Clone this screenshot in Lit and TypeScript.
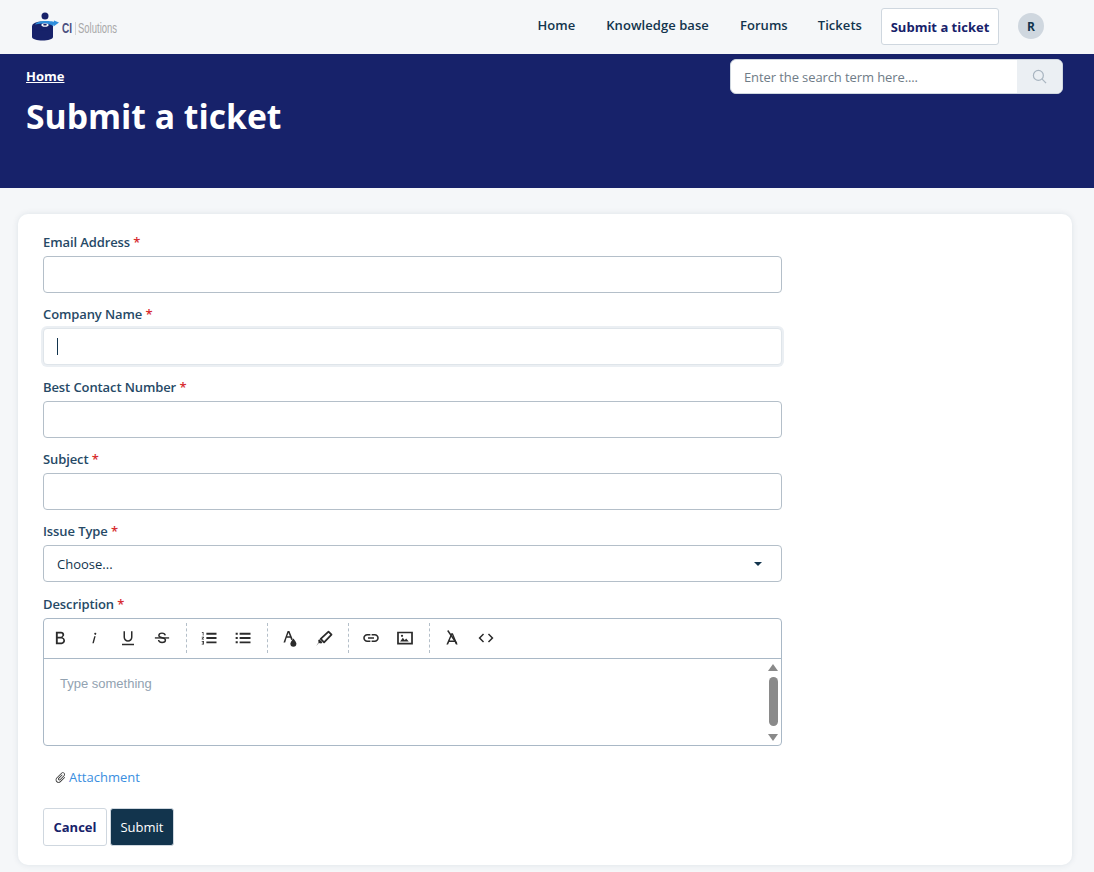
import { LitElement, html, css, svg } from "lit";
import { customElement } from "lit/decorators.js";

const ico = (body: unknown, w = 18) => html`<svg class="ic" width=${w} height=${w} viewBox="0 0 24 24" fill="currentColor">${body}</svg>`;

const groups = [
  [
    svg`<path d="M15.600 10.790c1.200-.8 2-1.800 2-3.100 0-2.200-1.900-3.900-4.200-3.900H6.500v16.400h7.700c2.500 0 4.500-1.900 4.500-4.400 0-2.100-1.200-3.800-3.100-4.600zM9 6.100h4.200c1.200 0 2.100.9 2.100 2s-.9 2.200-2.100 2.200H9V6.100zm5 11.800H9v-5.200h5c1.400 0 2.400 1.200 2.400 2.600s-1 2.600-2.400 2.600z"/>`,
    svg`<path d="M13.700 5a1.300 1.300 0 1 0 .01 0zM12.300 9.500l-2.500 9.500h1.900l2.500-9.500z"/>`,
    svg`<path d="M12 17c3.310 0 6-2.690 6-6V3h-2v8c0 2.200-1.800 4-4 4s-4-1.800-4-4V3H6v8c0 3.310 2.690 6 6 6zm-8 2.500v2h16v-2H4z"/>`,
    svg`<path d="M2.500 11h19v1.800h-19z"/><path d="M16.300 8.500c-.3-1.900-2-3-4.300-3-2.500 0-4.200 1.200-4.200 3 0 3.700 8.800 2.500 8.800 6.200 0 1.900-1.900 3.300-4.500 3.300-2.700 0-4.500-1.300-4.700-3.300" fill="none" stroke="currentColor" stroke-width="1.900"/>`,
  ],
  [
    svg`<path d="M8.500 5h13.500v2.500H8.500zM8.500 10.800h13.500v2.500H8.500zM8.500 16.500h13.500v2.500H8.500z"/><path d="M2.500 4h2.200v4.600h-1V5h-1.200zM2.300 10.200h3v1l-1.800 1.800h1.800v1h-3v-1l1.800-1.800H2.300zM2.300 16h3v4.800h-3v-1h2v-.9h-1.200v-.9h1.200V17h-2z"/>`,
    svg`<path d="M7.500 5h14.500v2.500H7.500zM7.500 10.800h14.500v2.500H7.500zM7.500 16.500h14.500v2.500H7.500z"/><path d="M2.200 4.900h2.800v2.800H2.200zM2.200 10.600h2.800v2.800H2.200zM2.200 16.300h2.800v2.800H2.200z"/>`,
  ],
  [
    svg`<path d="M8.800 2.500h2.400L15.800 14l-2.300.8-1-3H7.500L5.600 18H3.300zM8.200 9.800h3.600L10 4.900z"/><path d="M16.500 12.500s-4 4.500-4 7a4 4 0 0 0 8 0c0-2.500-4-7-4-7z"/>`,
    svg`<path d="M1.500 22.500l3.500-4 3.400.7 1.500-1.500-4.200-4.200-1.400 1.400.4 3.200z"/><path d="M7.600 13.200L18 3.600l4 4-9.900 10.200z" fill="none" stroke="currentColor" stroke-width="2.400" stroke-linejoin="round"/>`,
  ],
  [
    svg`<path d="M3.700 12c0-1.800 1.500-3.200 3.300-3.200h4.200V6.600H7c-3 0-5.400 2.400-5.400 5.400S4 17.400 7 17.400h4.200v-2.200H7c-1.800 0-3.300-1.400-3.300-3.200zM8 13.100h8v-2.200H8v2.200zm9-6.500h-4.200v2.200H17c1.800 0 3.300 1.400 3.300 3.200s-1.500 3.200-3.300 3.200h-4.200v2.200H17c3 0 5.400-2.400 5.400-5.400S20 6.600 17 6.600z"/>`,
    svg`<path fill-rule="evenodd" d="M1.500 3.500h21v17h-21zM3.800 5.800v12.400h16.400V5.800z"/><path d="M5.500 16.500l3.600-4.800 2.600 3.200 1.800-2.300 3.500 3.900z"/><circle cx="8" cy="9" r="1.500"/>`,
  ],
  [
    svg`<path d="M11 5.500h2.200L19.500 20.500h-2.300l-1.400-3.300H8.200l-1.400 3.300H4.500zM9 15.300h6L12 7.800z"/><path d="M5.500 2.600l1.600-1.200L19 18.800l-1.600 1.200z"/>`,
    svg`<path d="M9.400 16.600L4.800 12l4.600-4.600L8 6l-6 6 6 6 1.400-1.400zm5.200 0l4.600-4.600-4.600-4.600L16 6l6 6-6 6-1.400-1.400z"/>`,
  ],
];

@customElement("app-root")
export class AppRoot extends LitElement {
  static styles = css`
    :host { display: block; min-height: 872px; background: #f5f7f9; font-family: "Open Sans", sans-serif; color: #12344d; font-size: 13px; overflow: hidden; }
    * { box-sizing: border-box; }
    .top { height: 54px; display: flex; align-items: center; justify-content: space-between; padding: 0 50px 0 29px; }
    .logo { display: block; }
    .nav { display: flex; align-items: center; font-weight: 600; font-size: 13px; }
    .nav a { color: #12344d; text-decoration: none; margin-right: 30px; position: relative; top: -2px; letter-spacing: 0.06px; }
    .nav a.wide { margin-right: 31px; }
    .nav a.tickets { margin-right: 19px; }
    .nav a.active { top: -0.5px; margin-right: 19px; height: 37px; width: 118px; justify-content: center; display: flex; align-items: center; background: #fff; border: 1px solid #cfd7df; border-radius: 3px; color: #17226a; font-weight: 700; letter-spacing: 0; }
    .avatar { width: 26px; height: 26px; border-radius: 50%; background: #cfd7df; display: flex; align-items: center; justify-content: center; font-size: 12px; font-weight: 700; margin-top: -2px; }
    .banner { height: 134px; background: #17226a; color: #fff; padding: 5px 31px 0 26px; display: flex; justify-content: space-between; align-items: flex-start; }
    .crumb { color: #fff; font-weight: 700; font-size: 13px; text-decoration: underline; display: block; margin-top: 8px; }
    h1 { margin: 9px 0 0; font-size: 33.700px; line-height: 45px; font-weight: 700; }
    .search { width: 333px; height: 35px; display: flex; border-radius: 6px; background: #fff; border: 1px solid #cfd7df; overflow: hidden; }
    .search .ph { flex: 1; padding-left: 13px; line-height: 34px; color: #6f7c87; font-size: 13px; letter-spacing: -0.1px; }
    .search .btn { width: 45px; background: #ebeff3; display: flex; align-items: center; justify-content: center; color: #a9b5c0; }
    .card { margin: 26px 22px 0 18px; height: 651px; background: #fff; border-radius: 10px; box-shadow: 0 0 6px rgba(18, 52, 77, 0.1); padding: 18px 25px 0; }
    .form { width: 739px; }
    .field { display: block; margin-bottom: 11.350px; }
    .label { display: block; font-size: 13px; font-weight: 600; letter-spacing: -0.1px; line-height: 20px; margin-bottom: 4px; color: #264966; }
    .star { color: #d72d30; }
    .input { width: 100%; height: 37px; display: flex; align-items: center; border: 1px solid #b4bfc9; border-radius: 4px; padding: 0 13px; background: #fff; font: inherit; color: #12344d; outline: none; justify-content: space-between; }
    .input.focus { box-shadow: 0 0 0 2px #ebeff3; border: 1px solid #dfe5ea; }
    .caret { width: 1px; height: 17px; background: #12344d; }
    .tri { width: 0; height: 0; border: 4px solid transparent; border-top: 4px solid #12344d; border-bottom: 0; margin-right: 6px; }
    .editor { border: 1px solid #a9b8c6; border-radius: 4px; height: 128px; display: flex; flex-direction: column; }
    .tools { height: 40px; border-bottom: 1px solid #a9b8c6; display: flex; align-items: center; margin-left: -1px; flex: none; }
    .group { display: flex; align-items: center; height: 30px; padding-right: 7px; margin-right: 5px; border-right: 1px dashed #b4bfc9; }
    .group:last-child { border: 0; }
    .tool { width: 34px; display: flex; justify-content: center; color: #2b2b2b; }
    .ic { display: block; }
    .edit-body { flex: 1; display: flex; min-height: 0; }
    .ph2 { flex: 1; padding: 17px 16px 0; font-family: "Liberation Sans", Arial, sans-serif; font-size: 13px; color: #92a2b1; }
    .sb { width: 14px; display: flex; flex-direction: column; align-items: center; padding-top: 5px; margin-right: 1px; }
    .arrow { width: 0; height: 0; border: 5px solid transparent; }
    .arrow.up { border-top: 0; border-bottom: 7px solid #8a8a8a; }
    .arrow.down { border-bottom: 0; border-top: 7px solid #8a8a8a; margin-top: 8px; }
    .thumb { width: 9px; height: 49px; border-radius: 5px; background: #8a8a8a; margin-top: 6px; }
    .attach { display: flex; align-items: center; height: 20px; margin: 21px 0 0 11px; color: #3a8ee0; font-size: 13px; }
    .attach svg { margin-right: 2px; color: #333; margin-top: 2px; }
    .actions { display: flex; margin-top: 21px; gap: 3px; }
    .b { width: 64px; height: 38px; border-radius: 3px; border: 1px solid #cfd7df; display: flex; align-items: center; justify-content: center; font-size: 13px; background: #fff; color: #17226a; font-weight: 700; }
    .b.primary { background: #12344d; color: #fff; font-weight: 500; border-color: #cfd7df; }
  `;

  private field(label: string, body: unknown) {
    return html`<div class="field"><span class="label">${label} <span class="star">*</span></span>${body}</div>`;
  }

  render() {
    return html`
      <div class="top">
        <svg class="logo" width="92" height="32" viewBox="0 0 92 32" aria-label="CI Solutions">
          <circle cx="16" cy="5" r="3.500" fill="#17226a"/>
          <path d="M3 15v11c0 2 5 3.500 10.500 3.500S24 28 24 26V15z" fill="#17226a"/>
          <ellipse cx="13.500" cy="15" rx="10.500" ry="4.500" fill="#17226a"/>
          <path d="M6 13.500c2-2.800 6-3.500 10-3.500 5 0 9 .2 10 1.500l-2 3.500c-2-1.500-5-2.500-9-2.500-3 0-6 .2-9 1z" fill="#2f8fdc"/>
          <path d="M25 9.500l5 2-5.500 4z" fill="#2f8fdc"/>
          <ellipse cx="16" cy="14" rx="3.600" ry="1.800" fill="#fff"/>
          <ellipse cx="16" cy="13.700" rx="1.800" ry="0.900" fill="#17226a"/>
          <g transform="translate(33 22) scale(1 1.400)"><text x="0" y="0" font-family="Liberation Sans" font-size="10" font-weight="700" fill="#4a4f7f">CI</text></g>
          <rect x="46" y="11" width="0.7" height="13" fill="#c8c8c8"/>
          <g transform="translate(49 22) scale(0.950 1.400)"><text x="0" y="0" font-family="Liberation Sans" font-size="10" fill="#a8a8a8">Solutions</text></g>
        </svg>
        <div class="nav">
          <a class="wide">Home</a><a class="wide">Knowledge base</a><a>Forums</a><a class="tickets">Tickets</a><a class="active">Submit a ticket</a>
          <div class="avatar">R</div>
        </div>
      </div>
      <div class="banner">
        <div>
          <a class="crumb">Home</a>
          <h1>Submit a ticket</h1>
        </div>
        <div class="search">
          <div class="ph">Enter the search term here....</div>
          <div class="btn">
            <svg width="15" height="15" viewBox="0 0 16 16" fill="none" stroke="currentColor" stroke-width="1.300"><circle cx="6.800" cy="6.800" r="5.300"/><path d="M10.800 10.800l4.200 4.200"/></svg>
          </div>
        </div>
      </div>
      <div class="card">
        <div class="form">
          ${this.field("Email Address", html`<input class="input" />`)}
          ${this.field("Company Name", html`<div class="input focus"><span class="caret"></span></div>`)}
          ${this.field("Best Contact Number", html`<input class="input" />`)}
          ${this.field("Subject", html`<input class="input" />`)}
          ${this.field("Issue Type", html`<div class="input"><span>Choose...</span><span class="tri"></span></div>`)}
          ${this.field("Description", html`
            <div class="editor">
              <div class="tools">
                ${groups.map((g) => html`<div class="group">${g.map((p) => html`<div class="tool">${ico(p)}</div>`)}</div>`)}
              </div>
              <div class="edit-body">
                <div class="ph2">Type something</div>
                <div class="sb"><span class="arrow up"></span><span class="thumb"></span><span class="arrow down"></span></div>
              </div>
            </div>`)}
          <div class="attach">
            <svg width="13" height="13" viewBox="0 0 24 24" fill="currentColor"><path transform="rotate(45 12 12)" d="M16.500 6v11.500c0 2.210-1.790 4-4 4s-4-1.790-4-4V5c0-1.380 1.120-2.500 2.500-2.500s2.500 1.120 2.500 2.500v10.500c0 .55-.45 1-1 1s-1-.45-1-1V6H10v9.500c0 1.380 1.120 2.500 2.500 2.500s2.500-1.120 2.500-2.500V5c0-2.210-1.790-4-4-4S7 2.790 7 5v12.500c0 3.040 2.460 5.500 5.500 5.500s5.500-2.460 5.500-5.500V6h-1.500z"/></svg>
            Attachment
          </div>
          <div class="actions"><div class="b">Cancel</div><div class="b primary">Submit</div></div>
        </div>
      </div>
    `;
  }
}
